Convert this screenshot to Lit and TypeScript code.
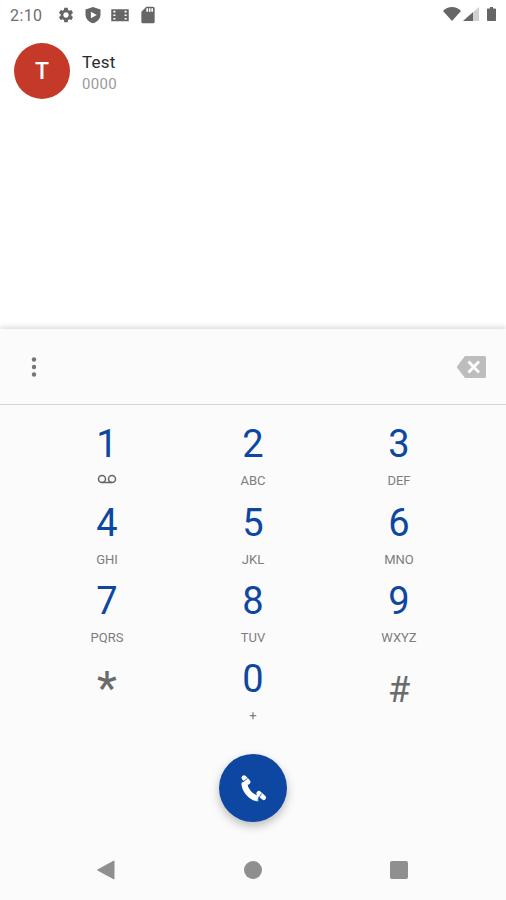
import { LitElement, html, css } from "lit";
import { customElement } from "lit/decorators.js";

const keys = [
  ["1", ""], ["2", "ABC"], ["3", "DEF"],
  ["4", "GHI"], ["5", "JKL"], ["6", "MNO"],
  ["7", "PQRS"], ["8", "TUV"], ["9", "WXYZ"],
];

@customElement("app-root")
export class AppRoot extends LitElement {
  static styles = css`
    :host { display: flex; flex-direction: column; width: 506px; height: 900px; overflow: hidden; background: #fff; font-family: Roboto, "Liberation Sans", sans-serif; }
    .status { height: 30px; display: flex; align-items: center; padding: 0 10px; box-sizing: border-box; flex: none; }
    .time { font-size: 16px; width: 42px; flex: none; letter-spacing: 0.4px; color: #6e6e6e; }
    .status svg { display: block; fill: #666; flex: none; }
    .sicons { display: grid; grid-template-columns: repeat(4, 27.4px); justify-items: center; align-items: center; }
    .sright { margin-left: auto; display: flex; align-items: center; padding-bottom: 2px; }
    .sig { margin: 0 8px 0 2px; }
    .list { height: 299px; flex: none; box-sizing: border-box; padding: 13px 14px 0; }
    .contact { display: flex; align-items: center; gap: 12px; }
    .avatar { width: 56px; height: 56px; border-radius: 50%; background: #c53929; color: #fff; font-size: 23px; font-weight: 500; display: flex; align-items: center; justify-content: center; }
    .info { padding-top: 4px; }
    .name { font-size: 17px; color: #2a2a2a; line-height: 20px; letter-spacing: 0.25px; }
    .num { font-size: 15px; color: #9a9a9a; line-height: 20px; letter-spacing: 0.3px; margin-top: 2px; }
    .panel { flex: 1; display: flex; flex-direction: column; background: #fbfbfb; box-shadow: 0 -2px 5px rgba(0,0,0,0.14); position: relative; }
    .bar { height: 75px; flex: none; border-bottom: 1px solid #d6d6d6; display: flex; align-items: center; justify-content: space-between; padding: 0 20px 0 22px; }
    .bar svg { display: block; }
    .grid { display: grid; grid-template-columns: repeat(3, 146px); grid-auto-rows: 78.3px; padding: 0 34px; margin-top: 2.4px; }
    .key { display: flex; flex-direction: column; align-items: center; padding-top: 18px; box-sizing: border-box; }
    .digit { font-size: 38px; line-height: 38px; color: #0d47a1; }
    .sub { font-size: 13px; line-height: 18px; height: 18px; margin-top: 9px; color: #7d7d7d; display: flex; align-items: center; }
    .sym { font-size: 38px; line-height: 38px; color: #6a6a6a; }
    .sym.star { margin-top: 9px; font-size: 46px; }
    .sym.hash { margin-top: 11px; font-size: 36px; }
    .fabrow { display: flex; justify-content: center; margin-top: 33.6px; }
    .fab { width: 68px; height: 68px; border-radius: 50%; background: #0d47a1; display: flex; align-items: center; justify-content: center; box-shadow: 0 4px 10px rgba(0,0,0,0.26); }
    .fab svg { display: block; }
    .nav { margin-top: auto; height: 60px; box-sizing: border-box; padding: 19px 34px 0; flex: none; display: grid; grid-template-columns: repeat(3, 146px); align-items: start; justify-items: center; }
    .nav svg { display: block; fill: #8f8f8f; }
  `;

  render() {
    return html`
      <div class="status">
        <span class="time">2:10</span>
        <div class="sicons">
          <svg width="18" height="18" viewBox="0 0 24 24"><path d="M19.14 12.94c.04-.3.06-.61.06-.94 0-.32-.02-.64-.07-.94l2.03-1.58a.49.49 0 0 0 .12-.61l-1.92-3.32a.488.488 0 0 0-.59-.22l-2.39.96c-.5-.38-1.03-.7-1.62-.94l-.36-2.54a.484.484 0 0 0-.48-.41h-3.84c-.24 0-.43.17-.47.41l-.36 2.54c-.59.24-1.13.57-1.62.94l-2.39-.96c-.22-.08-.47 0-.59.22L2.74 8.87c-.12.21-.08.47.12.61l2.03 1.58c-.05.3-.09.63-.09.94s.02.64.07.94l-2.03 1.58a.49.49 0 0 0-.12.61l1.92 3.32c.12.22.37.29.59.22l2.39-.96c.5.38 1.03.7 1.62.94l.36 2.54c.05.24.24.41.48.41h3.84c.24 0 .44-.17.47-.41l.36-2.54c.59-.24 1.13-.56 1.62-.94l2.39.96c.22.08.47 0 .59-.22l1.92-3.32c.12-.22.07-.47-.12-.61l-2.01-1.58zM12 15.6c-1.98 0-3.6-1.62-3.6-3.6s1.62-3.6 3.6-3.6 3.6 1.62 3.6 3.6-1.62 3.6-3.6 3.6z"/></svg>
          <svg width="20" height="20" viewBox="0 0 24 24"><path fill-rule="evenodd" d="M12 2.500 3 5.500v6c0 5 3.800 9 9 10.500 5.200-1.500 9-5.500 9-10.500v-6l-9-3zM9.500 8v8l7-4-7-4z"/></svg>
          <svg width="20" height="20" viewBox="0 0 24 24"><path fill-rule="evenodd" d="M1.500 5h21v14.500h-21V5zM4 7v2h2.500V7H4zm0 4.250v2h2.500v-2H4zm0 4.250v2h2.500v-2H4zM17.500 7v2H20V7h-2.500zm0 4.250v2H20v-2h-2.500zm0 4.250v2H20v-2h-2.500z"/></svg>
          <svg width="20" height="20" viewBox="0 0 24 24"><path d="M18 2h-8L4.020 8 4 20c0 1.100.9 2 2 2h12c1.100 0 2-.9 2-2V4c0-1.100-.9-2-2-2zm-6 6h-2V4h2v4zm3 0h-2V4h2v4zm3 0h-2V4h2v4z"/></svg>
        </div>
        <div class="sright">
          <svg width="18" height="14" viewBox="0 0 18 14"><path d="M0 4C2.500 1.500 5.500 0 9 0s6.500 1.500 9 4L9 14 0 4z"/></svg>
          <svg class="sig" width="16" height="14" viewBox="0 0 16 14"><path d="M0 14 16 0v14H0z" opacity=".3"/><path d="M0 14 10 5.250V14H0z"/></svg>
          <svg width="9" height="14" viewBox="0 0 9 14"><path d="M3 0h3v1.500h2.200a.8.800 0 0 1 .8.800v10.900a.8.800 0 0 1-.8.800H.8a.8.800 0 0 1-.8-.800V2.300a.8.800 0 0 1 .8-.800H3z"/></svg>
        </div>
      </div>
      <div class="list">
        <div class="contact">
          <div class="avatar">T</div>
          <div class="info">
            <div class="name">Test</div>
            <div class="num">0000</div>
          </div>
        </div>
      </div>
      <div class="panel">
        <div class="bar">
          <svg width="24" height="24" viewBox="0 0 24 24" fill="#757575"><circle cx="12" cy="4.500" r="2.200"/><circle cx="12" cy="12" r="2.200"/><circle cx="12" cy="19.500" r="2.200"/></svg>
          <svg width="29" height="22" viewBox="0 0 29 22"><path d="M8 0H27.500A1.500 1.500 0 0 1 29 1.500v19a1.500 1.500 0 0 1-1.500 1.500H8L.5 12.300a2 2 0 0 1 0-2.600z" fill="#bdbdbd"/><path d="M11.500 5.500 22 16.500M22 5.500 11.500 16.500" stroke="#fff" stroke-width="2.800" fill="none"/></svg>
        </div>
        <div class="grid">
          ${keys.map(([d, s]) => html`
            <div class="key">
              <div class="digit">${d}</div>
              <div class="sub">${d === "1"
                ? html`<svg width="20" height="10" viewBox="0 0 20 10" fill="none" stroke="#666" stroke-width="1.500"><circle cx="5" cy="5" r="3.500"/><circle cx="15" cy="5" r="3.500"/><path d="M5 8.500h10"/></svg>`
                : s}</div>
            </div>`)}
          <div class="key"><div class="sym star">*</div></div>
          <div class="key"><div class="digit">0</div><div class="sub">+</div></div>
          <div class="key"><div class="sym hash">#</div></div>
        </div>
        <div class="fabrow">
          <div class="fab">
            <svg width="28" height="28" viewBox="0 0 28 28" fill="none" stroke="#fff" stroke-linecap="round">
              <path d="M5.500 8C4.800 15 11.500 23.800 19.500 24.500" stroke-width="6" stroke-linecap="butt"/>
              <path d="M5 3.800 9 8" stroke-width="5"/>
              <path d="M20 19.500 24.500 23.500" stroke-width="5"/>
              <path d="M2 9 8.500 4.500M18.500 26.500 22.500 19.500" stroke="#0d47a1" stroke-width=".8" stroke-linecap="butt"/>
            </svg>
          </div>
        </div>
        <div class="nav">
          <svg width="22" height="22" viewBox="0 0 22 22"><path d="M1.500 11 18 2v18z" stroke="#8f8f8f" stroke-linejoin="round"/></svg>
          <svg width="22" height="22" viewBox="0 0 22 22"><circle cx="11" cy="11" r="9"/></svg>
          <svg width="22" height="22" viewBox="0 0 22 22"><rect x="2" y="2" width="18" height="18" rx="2"/></svg>
        </div>
      </div>
    `;
  }
}
